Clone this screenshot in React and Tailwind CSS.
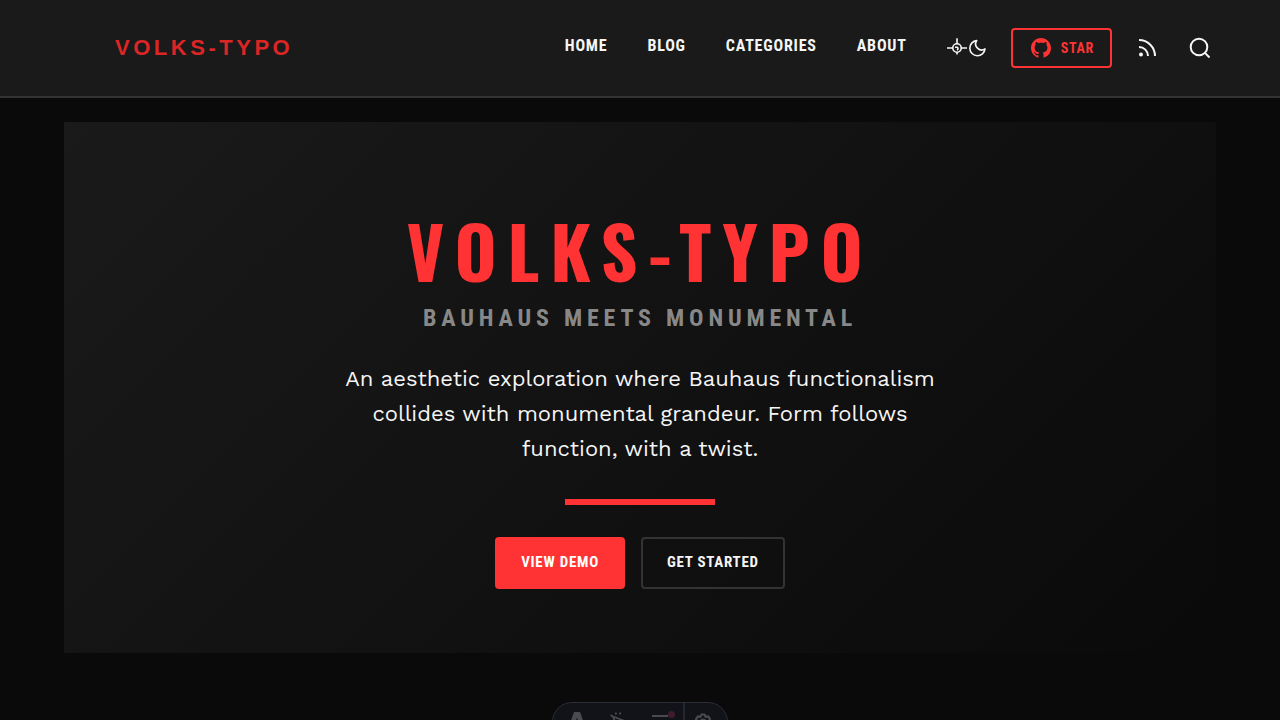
import React from "react";

const condensed = "font-['Roboto_Condensed','Liberation_Sans_Narrow',sans-serif]";
const display = "font-['Oswald','Roboto_Condensed','Liberation_Sans_Narrow',sans-serif]";

function GithubMark() {
  return (
    <svg className="size-5" viewBox="0 0 16 16" fill="currentColor" aria-hidden="true">
      <path d="M8 0C3.58 0 0 3.58 0 8c0 3.54 2.29 6.53 5.47 7.59.4.07.55-.17.55-.38 0-.19-.01-.82-.01-1.49-2.01.37-2.53-.49-2.69-.94-.09-.23-.48-.94-.82-1.13-.28-.15-.68-.52-.01-.53.63-.01 1.08.58 1.23.82.72 1.21 1.87.87 2.33.66.07-.52.28-.87.51-1.07-1.78-.2-3.64-.89-3.64-3.95 0-.87.31-1.59.82-2.15-.08-.2-.36-1.02.08-2.12 0 0 .67-.21 2.2.82.64-.18 1.32-.27 2-.27.68 0 1.36.09 2 .27 1.53-1.04 2.2-.82 2.2-.82.44 1.1.16 1.92.08 2.12.51.56.82 1.27.82 2.15 0 3.07-1.87 3.75-3.65 3.95.29.25.54.73.54 1.48 0 1.07-.01 1.93-.01 2.2 0 .21.15.46.55.38A8.013 8.013 0 0016 8c0-4.42-3.58-8-8-8z" />
    </svg>
  );
}

function ThemeIcon() {
  return (
    <svg width="40" height="20" viewBox="0 0 40 20" fill="none" stroke="currentColor" strokeWidth="1.6" aria-hidden="true">
      <circle cx="10" cy="10" r="4.2" />
      <path d="M10 0.2v6M10 14v2.5M0 10h6M14 10h6M8 9.3h2.2c1 .6 1 2-.2 2.7" />
      <path d="M38 10.9A7.6 7.6 0 1 1 29.7 2.6a6 6 0 0 0 8.3 8.3z" strokeLinejoin="round" />
    </svg>
  );
}

function DevToolbar() {
  return (
    <div className="fixed -bottom-[22px] left-1/2 flex h-10 w-44 -translate-x-1/2 overflow-hidden rounded-full border border-[#2b2e36] bg-[#111318] text-[#4a4b50]">
      <button type="button" aria-label="Menu" className="flex w-12 items-center justify-center">
        <svg width="16" height="20" viewBox="0 0 16 20" fill="currentColor" aria-hidden="true">
          <path d="M4.600.8Q5 0 5.800 0H10.200Q11 0 11.400.8L16 15Q12.500 13.600 10.500 13.500L8 5.500 5.500 13.500Q3 13.700 0 15z" />
        </svg>
      </button>
      <button type="button" aria-label="Inspect" className="flex w-9 items-center justify-center">
        <svg width="18" height="20" viewBox="0 0 18 20" fill="none" stroke="currentColor" strokeWidth="1.8" aria-hidden="true">
          <path d="M3 4.5L16 9.5 10.5 12 8 17.5zM5.500.5l.8 2M10.500.5l-.8 2M.5 3l2.500 1.500" />
        </svg>
      </button>
      <button type="button" aria-label="Audit" className="relative flex w-[46px] items-center justify-center">
        <svg width="18" height="16" viewBox="0 0 18 16" fill="none" stroke="currentColor" strokeWidth="2" aria-hidden="true">
          <path d="M1 2h16M1 8h12M1 14h8" />
        </svg>
        <span className="absolute top-2 right-2 size-[7px] rounded-full bg-[#401c2c]" />
      </button>
      <button type="button" aria-label="Settings" className="flex flex-1 items-center justify-center border-l-2 border-[#25272e] pr-1.5">
        <svg width="20" height="20" viewBox="0 0 24 24" fill="none" stroke="currentColor" strokeWidth="2.4" strokeLinejoin="round" aria-hidden="true">
          <path d="M10 3h4l1 3 3-1 2.500 3.500-2 2.500v2l2 2.500L18 19l-3-1-1 3h-4l-1-3-3 1-2.500-3.500 2-2.500v-2l-2-2.500L6 5l3 1z" />
          <circle cx="12" cy="12" r="3" />
        </svg>
      </button>
    </div>
  );
}

export default function App() {
  return (
    <div className="min-h-screen bg-[#0a0a0a] text-[#f5f5f5]">
      <header className="flex h-[98px] items-center justify-between border-b-2 border-[#333] bg-[#1a1a1a] pr-[66px] pl-[115px]">
        <a href="#" className="pb-0.5 font-['Liberation_Sans',sans-serif] text-[22px] font-bold tracking-[0.16em] text-[#dc2626]">VOLKS-TYPO</a>
        <div className="flex items-center">
          <nav className={`flex gap-10 pb-1 text-base font-bold tracking-wider ${condensed}`}>
            <a href="#home">HOME</a>
            <a href="#blog">BLOG</a>
            <a href="#categories">CATEGORIES</a>
            <a href="#about">ABOUT</a>
          </nav>
          <button type="button" aria-label="Toggle theme" className="ml-10">
            <ThemeIcon />
          </button>
          <a href="#star" className={`ml-6 flex h-10 items-center gap-2.5 rounded border-2 border-[#ff3333] pr-4 pl-[18px] text-sm font-bold tracking-wider text-[#ff3333] ${condensed}`}>
            <GithubMark />
            STAR
          </a>
          <a href="#rss" aria-label="RSS feed" className="ml-[22px] p-0.5">
            <svg className="size-6" viewBox="0 0 24 24" fill="none" stroke="currentColor" strokeWidth="2" aria-hidden="true">
              <path d="M3 11a9 9 0 0 1 9 9M3 4a16 16 0 0 1 16 16" />
              <circle cx="5" cy="18.6" r="2" fill="currentColor" stroke="none" />
            </svg>
          </a>
          <button type="button" aria-label="Search" className="ml-6 p-0.5">
            <svg className="size-6" viewBox="0 0 24 24" fill="none" stroke="currentColor" strokeWidth="2" aria-hidden="true">
              <circle cx="11" cy="11" r="8.3" />
              <path d="m21.500 21.500-4.600-4.600" />
            </svg>
          </button>
        </div>
      </header>
      <main className="px-16 pt-6 pb-16">
        <section className="flex flex-col items-center bg-linear-135 from-[#1a1a1a] to-[#0a0a0a] px-8 pt-20 pb-16 text-center">
          <h1 className={`mb-1 text-7xl leading-24 font-bold tracking-[0.15em] text-[#ff3333] ${display}`}>VOLKS-TYPO</h1>
          <p className={`text-2xl font-bold tracking-[0.2em] text-[#888] ${condensed}`}>BAUHAUS MEETS MONUMENTAL</p>
          <p className="mt-[27px] max-w-[600px] font-['Work_Sans','Inter',sans-serif] text-[22px] leading-[1.6]">
            An aesthetic exploration where Bauhaus functionalism collides with monumental grandeur. Form follows function, with a twist.
          </p>
          <div className="mt-8 h-1.5 w-[150px] bg-[#ff3333]" />
          <div className={`mt-8 flex gap-4 text-[15px] font-bold tracking-wider ${condensed}`}>
            <a href="#demo" className="flex h-[52px] items-center rounded border-2 border-[#ff3333] bg-[#ff3333] px-6 text-white">VIEW DEMO</a>
            <a href="#start" className="flex h-[52px] items-center rounded border-2 border-[#333] px-6">GET STARTED</a>
          </div>
        </section>
      </main>
      <DevToolbar />
    </div>
  );
}
